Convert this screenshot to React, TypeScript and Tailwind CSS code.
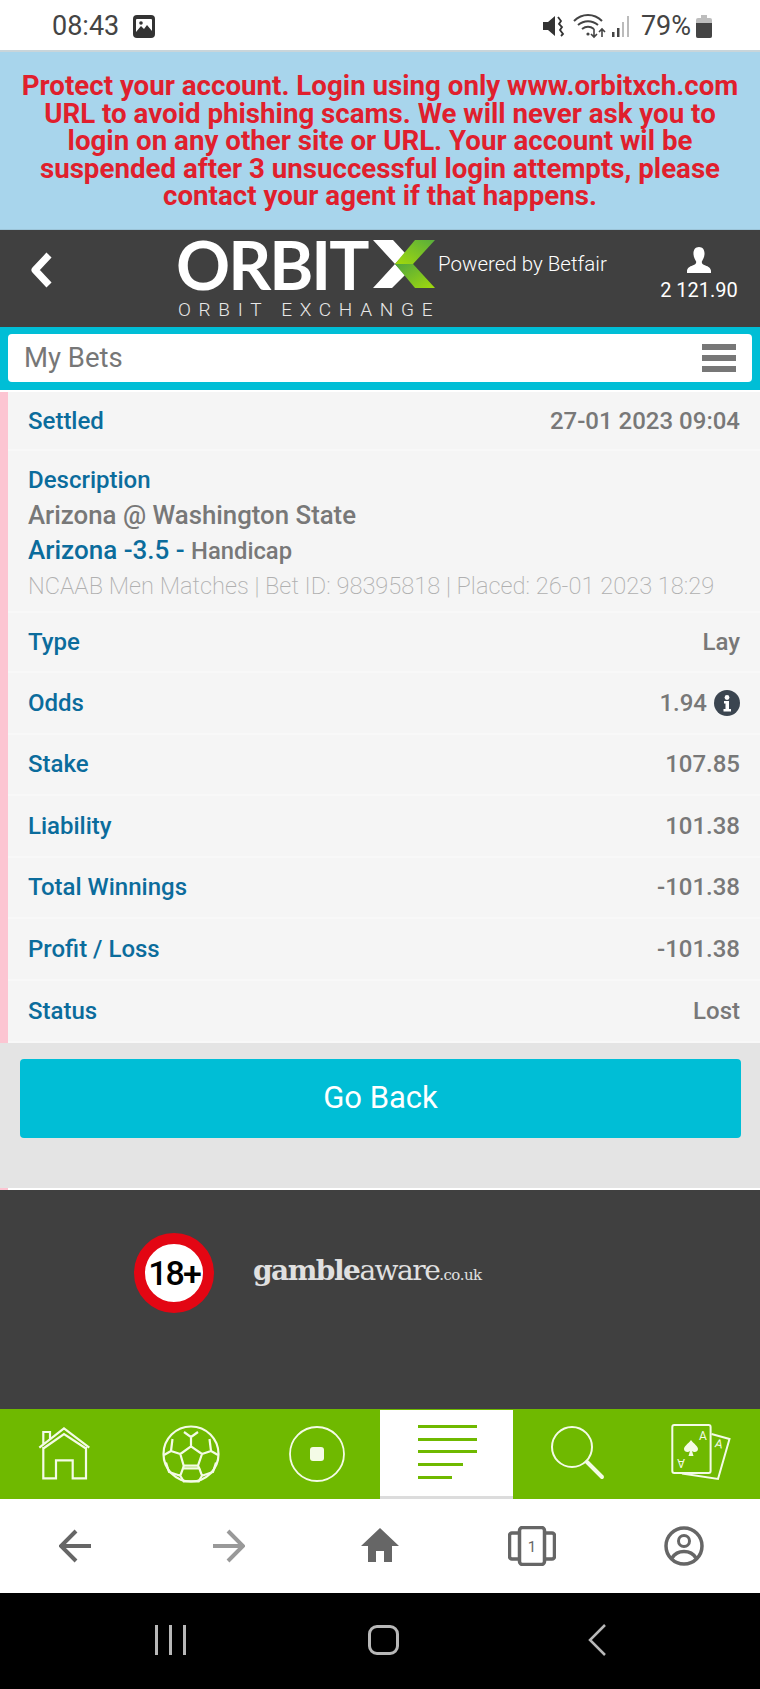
import React from 'react';

const ROBOTO = "font-['Roboto',sans-serif]";

const rows = [
  { label: 'Stake', value: '107.85' },
  { label: 'Liability', value: '101.38' },
  { label: 'Total Winnings', value: '-101.38' },
  { label: 'Profit / Loss', value: '-101.38' },
];

const bannerLines = [
  'Protect your account. Login using only www.orbitxch.com',
  'URL to avoid phishing scams. We will never ask you to',
  'login on any other site or URL. Your account wil be',
  'suspended after 3 unsuccessful login attempts, please',
  'contact your agent if that happens.',
];

const Row: React.FC<{ label: string; className?: string; children: React.ReactNode }> = ({ label, className = 'h-[61.500px]', children }) => (
  <div className={`flex items-center justify-between border-b-2 border-[#f8f8f8] pl-5 pr-5 text-[24px] font-medium ${className}`}>
    <span className="text-[#0b6c9c]">{label}</span>
    <span className="flex items-center text-[#787878]">{children}</span>
  </div>
);

const StatusBar = () => (
  <div className="flex h-[52px] items-center bg-white pl-[52px] pr-[48px] text-[27px] text-[#444] shadow-[inset_0_-2px_0_#c9d5da]">
    <span>08:43</span>
    <svg className="ml-[14px] h-[23px] w-[22px]" viewBox="0 0 22 23">
      <rect x="0" y="0" width="22" height="23" rx="4" fill="#333" />
      <rect x="3" y="4" width="16" height="15" rx="1" fill="#fff" />
      <path d="M3 17l5-6 3 3 3-4 5 6v3H3z" fill="#333" />
      <circle cx="8" cy="8" r="1.8" fill="#333" />
    </svg>
    <div className="ml-auto flex items-center">
      <svg className="h-[24px] w-[22px]" viewBox="0 0 22 24">
        <path d="M0 8h5l7-6v20l-7-6H0z" fill="#333" />
        <path d="M15 3l3 4-2 3 3 3-2 3 3 4-2 2" fill="none" stroke="#333" strokeWidth="1.8" />
      </svg>
      <svg className="ml-[8px] h-[26px] w-[34px]" viewBox="0 0 34 26">
        <path d="M1 8c8-8 20-8 28 0M5 12c6-5 14-5 20 0M9 16c4-3 8-3 12 0" fill="none" stroke="#444" strokeWidth="2" />
        <circle cx="15" cy="21" r="1.6" fill="#444" />
        <path d="M21 16v8m-3-3l3 3 3-3M29 24v-8m-3 3l3-3 3 3" fill="none" stroke="#444" strokeWidth="1.6" />
      </svg>
      <svg className="ml-[4px] h-[24px] w-[20px]" viewBox="0 0 20 24">
        <rect x="1" y="18" width="2.5" height="5" fill="#444" />
        <rect x="6" y="14" width="2.5" height="9" fill="#444" />
        <rect x="11" y="8" width="2" height="15" fill="#bbb" />
        <rect x="16" y="2" width="2" height="21" fill="#bbb" />
      </svg>
      <span className="ml-[10px]">79%</span>
      <svg className="ml-[5px] h-[23px] w-[16px]" viewBox="0 0 16 23">
        <path d="M5 0h6v3h3a2 2 0 012 2v16a2 2 0 01-2 2H2a2 2 0 01-2-2V5a2 2 0 012-2h3z" fill="#bdbdbd" />
        <path d="M0 8h16v13a2 2 0 01-2 2H2a2 2 0 01-2-2z" fill="#444" />
      </svg>
    </div>
  </div>
);

const Logo = () => (
  <div className="ml-[121px] flex w-[440px] flex-col">
    <div className="flex h-[52px] items-center">
      <span className="w-[194px] font-['Lato',sans-serif] text-[67px] leading-[52px] font-bold tracking-[-2px] text-white">ORBIT</span>
      <svg className="h-[48px] w-[65px]" viewBox="0 0 65 48">
        <defs>
          <linearGradient id="armTop" x1="1" y1="0" x2="0" y2="1">
            <stop offset="0" stopColor="#58ad3c" />
            <stop offset="1" stopColor="#a2da0c" />
          </linearGradient>
          <linearGradient id="armBottom" x1="0" y1="0" x2="1" y2="1">
            <stop offset="0" stopColor="#4fa53e" />
            <stop offset="1" stopColor="#a2da0c" />
          </linearGradient>
        </defs>
        <path d="M3 0h20l12 13-10 11zM3 48h19l13-13-10-11z" fill="#fff" />
        <path d="M45 0h20L43 24H25z" fill="url(#armTop)" />
        <path d="M25 24h18l22 24H45z" fill="url(#armBottom)" />
      </svg>
      <span className="ml-[3px] text-[20.500px] font-light whitespace-nowrap text-white">Powered by Betfair</span>
    </div>
    <span className="mt-[10px] ml-[2px] text-[19px] leading-none font-light tracking-[7.700px] whitespace-nowrap text-[#e8e8e8]">ORBIT EXCHANGE</span>
  </div>
);

const Header = () => (
  <div className="flex h-[97px] items-center bg-[#404040]">
    <svg className="mb-[17px] ml-[28px] h-[36px] w-[27px]" viewBox="0 0 27 36">
      <path d="M21 3L7 18l14 15" fill="none" stroke="#fff" strokeWidth="7" strokeLinejoin="round" />
    </svg>
    <Logo />
    <div className="mr-[11px] mb-[12px] ml-auto flex w-[100px] flex-col items-center">
      <svg className="mt-[2px] h-[26px] w-[24px]" viewBox="0 0 26 28">
        <path d="M13 0c4 0 6 3 6 7 0 4-2 7-3 9 0 2 1 3 4 4 3 1 6 3 6 6v2H0v-2c0-3 3-5 6-6 3-1 4-2 4-4-1-2-3-5-3-9 0-4 2-7 6-7z" fill="#fff" />
      </svg>
      <span className="mt-[7px] text-[20px] leading-none whitespace-nowrap text-white">2 121.90</span>
    </div>
  </div>
);

const TitleBar = () => (
  <div className="bg-[#00bed6] px-2 pt-[7px] pb-2">
    <div className="flex h-[48px] items-center justify-between rounded-[4px] bg-white pr-[16px] pl-[16px]">
      <span className="text-[27.500px] text-[#777]">My Bets</span>
      <div className="-mt-px flex w-[34px] flex-col gap-[5px]">
        <div className="h-[6px] bg-[#777]" />
        <div className="h-[6px] bg-[#777]" />
        <div className="h-[6px] bg-[#777]" />
      </div>
    </div>
  </div>
);

const BetDetails = () => (
  <div className="mt-[2px] border-l-8 border-[#fcc5d2] bg-[#f5f5f5]">
    <Row label="Settled" className="h-[59px]">27-01 2023 09:04</Row>
    <div className="flex h-[162px] flex-col border-b-2 border-[#f8f8f8] pt-[12px] pl-5 font-medium">
      <span className="h-[35px] text-[24px] leading-[35px] text-[#0b6c9c]">Description</span>
      <span className="h-[35px] text-[25.800px] leading-[35px] text-[#787878]">Arizona @ Washington State</span>
      <span className="h-[35px] text-[26px] leading-[35px] text-[#0b6c9c]">
        Arizona -3.5 - <span className="text-[23.800px] text-[#787878]">Handicap</span>
      </span>
      <span className="mt-px h-[35px] text-[23.600px] leading-[35px] font-extralight whitespace-nowrap text-[#b0b0b0]">
        NCAAB Men Matches | Bet ID: 98395818 | Placed: 26-01 2023 18:29
      </span>
    </div>
    <Row label="Type" className="h-[60px]">Lay</Row>
    <Row label="Odds">
      1.94
      <svg className="ml-[7px] h-[26px] w-[26px]" viewBox="0 0 26 26">
        <circle cx="13" cy="13" r="13" fill="#3b4550" />
        <circle cx="13" cy="7.5" r="2.4" fill="#fff" />
        <path d="M10 11h5v8h2v2.5H9.500V19h2v-5.500H10z" fill="#fff" />
      </svg>
    </Row>
    {rows.map((row) => (
      <Row key={row.label} label={row.label}>{row.value}</Row>
    ))}
    <Row label="Status" className="h-[62.500px]">Lost</Row>
  </div>
);

const Footer = () => (
  <div className="flex h-[219px] items-start bg-[#404040] pt-[43px] pl-[134px]">
    <div className="flex h-[80px] w-[80px] items-center justify-center rounded-full border-[11px] border-[#e30613] bg-white text-[34px] font-medium tracking-[-2px] text-black">
      18+
    </div>
    <span className="mt-[17px] ml-[39px] font-['DejaVu_Serif',serif] text-[#e0e0e0]">
      <span className="text-[28px] font-bold tracking-[-1.500px]">gamble</span>
      <span className="text-[28px] tracking-[-1.500px]">aware</span>
      <span className="text-[15px] tracking-[-0.500px]">.co.uk</span>
    </span>
  </div>
);

const TabBar = () => (
  <div className="grid h-[90px] grid-cols-[127px_127px_126px_133px_123px_1fr] bg-[#6fb900] text-[#f4fbe6]">
    <div className="flex items-center justify-center pb-[3px]">
      <svg className="h-[60px] w-[60px]" viewBox="0 0 60 60" fill="none" stroke="currentColor" strokeWidth="2.200">
        <path d="M5.300 24.700L30 5.300l25.300 19.400M9.300 24V55.300H22V37.300H38.700V55.300H52V24M9.300 21V9H16V15.500M9.300 25.500L30 11l22 14.500" />
      </svg>
    </div>
    <div className="flex items-center justify-center pb-[1px]">
      <svg className="h-[60px] w-[60px]" viewBox="0 0 60 60" fill="none" stroke="currentColor" strokeWidth="2.200">
        <circle cx="30" cy="30" r="27.500" />
        <path d="M30 22.300L41 30L37 41.700H22.700L19.300 30zM30 22.300V13L23 8M30 13L37 8M41 30L50 27L48.500 15M50 27L57 31M19.300 30L10 27L11.500 15M10 27L3 31M22.700 41.700L22 44.300H38.300L37 41.700M22 44.300L19.300 51.700L22.700 57.300H37.700L41 51.700L38.300 44.300M19.300 51.700L8 48L5 38.500M41 51.700L52 48L55 38.500" />
      </svg>
    </div>
    <div className="flex items-center justify-center">
      <svg className="h-[56px] w-[56px]" viewBox="0 0 56 56">
        <circle cx="28" cy="28" r="27" fill="none" stroke="currentColor" strokeWidth="1.800" />
        <rect x="21" y="21" width="14" height="14" rx="3" fill="currentColor" />
      </svg>
    </div>
    <div className="mt-px flex flex-col items-start gap-[9.700px] border-b-[3px] border-[#dcdcdc] bg-white pt-[15px] pl-[38px]">
      <div className="h-[3px] w-[59px] bg-[#6fb900]" />
      <div className="h-[3px] w-[59px] bg-[#6fb900]" />
      <div className="h-[3px] w-[59px] bg-[#6fb900]" />
      <div className="h-[3px] w-[45px] bg-[#6fb900]" />
      <div className="h-[3px] w-[34px] bg-[#6fb900]" />
    </div>
    <div className="flex items-center justify-center pb-[4px] pl-[4px]">
      <svg className="h-[60px] w-[60px]" viewBox="0 0 60 60" fill="none" stroke="currentColor">
        <circle cx="25" cy="25" r="20" strokeWidth="2" />
        <path d="M40 40L55 55" strokeWidth="4" strokeLinecap="round" />
      </svg>
    </div>
    <div className="flex items-center justify-center pl-[4px]">
      <svg className="h-[80px] w-[80px]" viewBox="0 0 80 80">
        <rect x="12.300" y="11" width="38.300" height="48" rx="2" fill="none" stroke="currentColor" strokeWidth="2" />
        <path d="M51.500 20L69.500 25L58 65L22 59.500" fill="none" stroke="currentColor" strokeWidth="2" />
        <path d="M31 26c3 4 7 6 7 9 0 3-4 4-6 2l1.500 5h-5L30 37c-2 2-6 1-6-2 0-3 4-5 7-9z" fill="currentColor" />
        <text x="39" y="26" fontSize="12" fill="currentColor" fontFamily="Roboto, sans-serif">A</text>
        <text x="-25" y="-45" fontSize="12" fill="currentColor" fontFamily="Roboto, sans-serif" transform="rotate(180)">A</text>
        <text x="55" y="34" fontSize="12" fill="currentColor" fontFamily="Roboto, sans-serif" transform="rotate(12 59 30)">A</text>
      </svg>
    </div>
  </div>
);

const BrowserBar = () => (
  <div className="grid h-[94px] grid-cols-5 bg-white text-[#666]">
    <div className="flex items-center justify-center">
      <svg className="h-[34px] w-[34px]" viewBox="0 0 34 34" fill="none" stroke="currentColor" strokeWidth="4">
        <path d="M32 17H3M17 2L2 17l15 15" />
      </svg>
    </div>
    <div className="flex items-center justify-center text-[#999]">
      <svg className="h-[34px] w-[34px]" viewBox="0 0 34 34" fill="none" stroke="currentColor" strokeWidth="4">
        <path d="M2 17H31M17 2l15 15-15 15" />
      </svg>
    </div>
    <div className="flex items-center justify-center">
      <svg className="h-[36px] w-[38px]" viewBox="0 0 38 36" fill="currentColor">
        <path d="M19 0L38 18H31V34H23V23H15V34H7V18H0z" />
      </svg>
    </div>
    <div className="flex items-center justify-center">
      <svg className="h-[40px] w-[48px]" viewBox="0 0 48 40" fill="none" stroke="currentColor" strokeWidth="3.500">
        <rect x="11.500" y="1.500" width="25" height="37" rx="3" />
        <path d="M11 7H4a2.500 2.500 0 00-2.500 2.500v21A2.500 2.500 0 004 33h7M37 7h7a2.500 2.500 0 012.500 2.500v21A2.500 2.500 0 0144 33h-7" />
        <text x="24" y="26" textAnchor="middle" fontSize="15" fill="currentColor" stroke="none" fontFamily="Roboto, sans-serif">1</text>
      </svg>
    </div>
    <div className="flex items-center justify-center">
      <svg className="h-[40px] w-[40px]" viewBox="0 0 40 40" fill="none" stroke="currentColor" strokeWidth="3.500">
        <circle cx="20" cy="20" r="18" />
        <circle cx="20" cy="15" r="5.500" strokeWidth="3" />
        <path d="M8 32c3-5 7-6.500 12-6.500S29 27 32 32" />
      </svg>
    </div>
  </div>
);

const SystemBar = () => (
  <div className="grid h-[96px] grid-cols-3 bg-black pr-[57px] pl-[64px] text-[#b8b8b8]">
    <div className="flex items-center justify-center gap-[11px] pb-[3px]">
      <div className="h-[30px] w-[3px] bg-[#b8b8b8]" />
      <div className="h-[30px] w-[3px] bg-[#b8b8b8]" />
      <div className="h-[30px] w-[3px] bg-[#b8b8b8]" />
    </div>
    <div className="flex items-center justify-center pb-[3px]">
      <div className="h-[30px] w-[31px] rounded-[9px] border-[3px] border-[#b8b8b8]" />
    </div>
    <div className="flex items-center justify-center pb-[3px]">
      <svg className="h-[32px] w-[18px]" viewBox="0 0 18 32" fill="none" stroke="currentColor" strokeWidth="2.500">
        <path d="M17 1L2 16l15 15" />
      </svg>
    </div>
  </div>
);

const App: React.FC = () => (
  <div className={`h-[1689px] w-[760px] overflow-hidden bg-white ${ROBOTO}`}>
    <StatusBar />
    <div className="flex h-[178px] flex-col items-center justify-center bg-[#a8d5ec] text-center text-[27.700px] font-bold text-[#e01f2d] shadow-[inset_0_-1px_0_#9cc4d8]">
      {bannerLines.map((line) => (
        <div key={line} className="h-[27.500px] leading-[27.500px] whitespace-nowrap">{line}</div>
      ))}
    </div>
    <Header />
    <TitleBar />
    <BetDetails />
    <div className="h-[145px] bg-[#e4e4e4] pt-[16px] pr-[19px] pl-[20px]">
      <button className="h-[79px] w-full rounded-[4px] bg-[#00bed6] text-[31px] text-white">Go Back</button>
    </div>
    <div className="h-[2px] border-l-8 border-[#fcc5d2] bg-white" />
    <Footer />
    <TabBar />
    <BrowserBar />
    <SystemBar />
  </div>
);

export default App;
